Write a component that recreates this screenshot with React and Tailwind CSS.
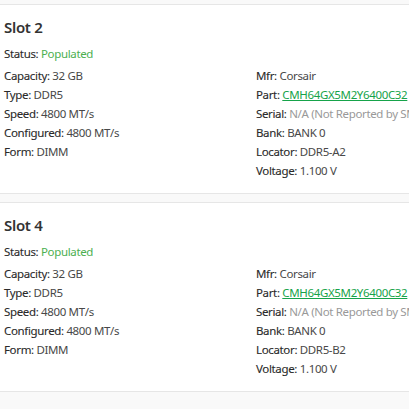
const slots = [
  {
    name: "Slot 2",
    left: [
      ["Capacity", "32 GB"],
      ["Type", "DDR5"],
      ["Speed", "4800 MT/s"],
      ["Configured", "4800 MT/s"],
      ["Form", "DIMM"],
    ],
    locator: "DDR5-A2",
  },
  {
    name: "Slot 4",
    left: [
      ["Capacity", "32 GB"],
      ["Type", "DDR5"],
      ["Speed", "4800 MT/s"],
      ["Configured", "4800 MT/s"],
      ["Form", "DIMM"],
    ],
    locator: "DDR5-B2",
  },
];

function Row({ label, children }) {
  return (
    <div className="h-[19px] leading-[19px] whitespace-nowrap">
      <span className="text-[#2a2a2a] [-webkit-text-stroke:0.1px_#2a2a2a]">{label}:</span>{" "}
      {children}
    </div>
  );
}

function SlotCard({ slot }) {
  return (
    <div className="bg-white border-y border-[#e6e6e6] pt-[10px] pb-[13px] pl-[4px]">
      <h3 className="text-[15px] leading-[24px] font-semibold tracking-[-0.3px] text-[#333]">
        {slot.name}
      </h3>
      <div className="mt-[5px] text-[11.5px] tracking-[-0.35px] text-[#484848]">
        <Row label="Status">
          <span className="text-[#4caf50]">Populated</span>
        </Row>
      </div>
      <div className="mt-[3px] grid grid-cols-[252px_1fr] text-[11.5px] tracking-[-0.35px] text-[#484848]">
        <div>
          {slot.left.map(([k, v]) => (
            <Row key={k} label={k}>
              {v}
            </Row>
          ))}
        </div>
        <div>
          <Row label="Mfr">Corsair</Row>
          <Row label="Part">
            <span className="text-[#16a34a] underline">CMH64GX5M2Y6400C32</span>
          </Row>
          <Row label="Serial">
            <span className="text-[#999]">N/A (Not Reported by SMBIOS)</span>
          </Row>
          <Row label="Bank">BANK 0</Row>
          <Row label="Locator">{slot.locator}</Row>
          <Row label="Voltage">1.100 V</Row>
        </div>
      </div>
    </div>
  );
}

export default function App() {
  return (
    <div
      className="w-[409px] h-[409px] overflow-hidden bg-[#f9f9f9] pt-[4px]"
      style={{ fontFamily: '"Noto Sans", "Open Sans", sans-serif' }}
    >
      <div className="flex flex-col gap-[8px] w-[500px]">
        {slots.map((s) => (
          <SlotCard key={s.name} slot={s} />
        ))}
      </div>
    </div>
  );
}
